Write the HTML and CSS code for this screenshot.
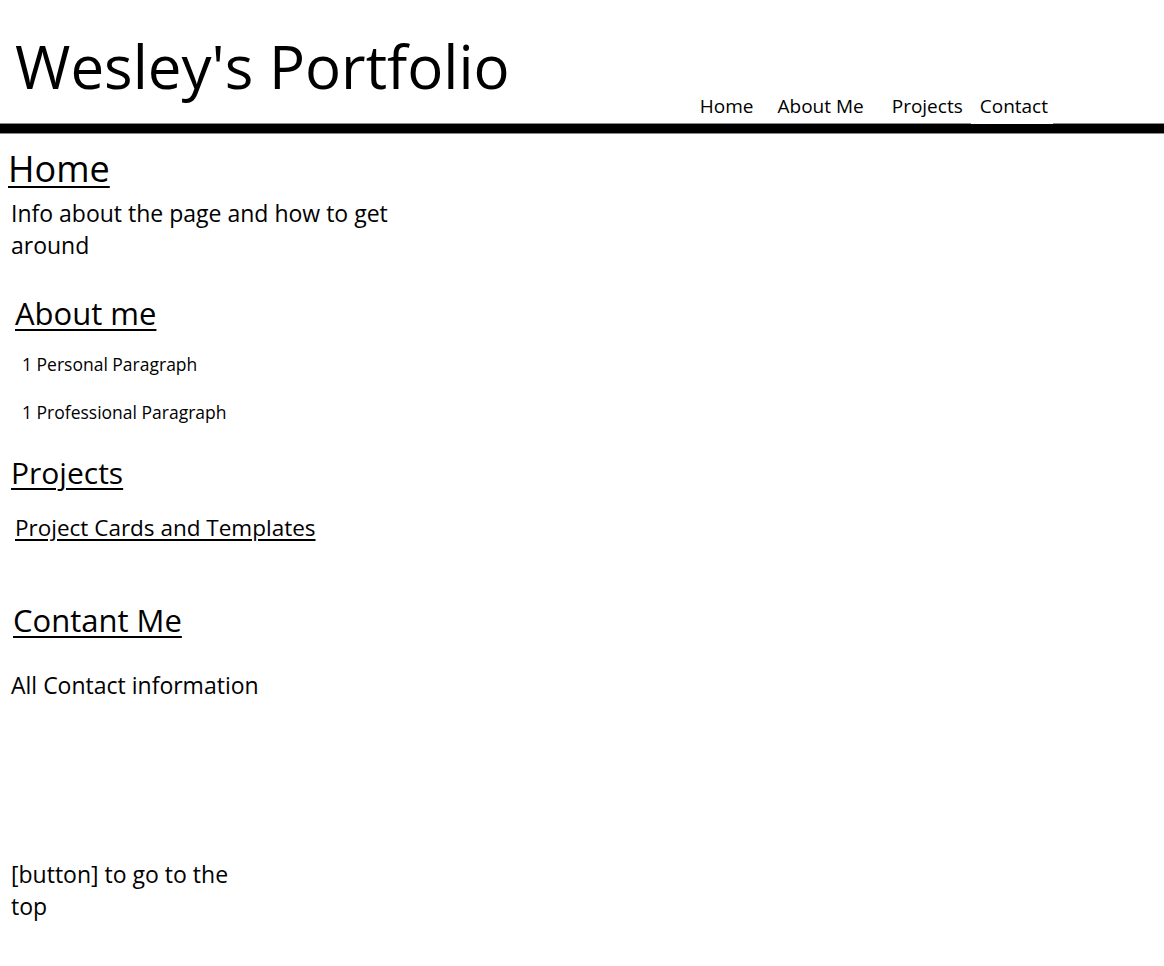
FILE: index.html
```html
<!DOCTYPE html>
<html lang="en">

<head>
    <meta charset="UTF-8">
    <meta name="viewport" content="width=device-width, initial-scale=1.0">
    <title>Wesley's Portfolio</title>
    <link rel="stylesheet" href="styles.css">
</head>

<body>

    <!-- Header -->
    <header class="header">
        <h1 class="title">Wesley's Portfolio</h1>
        <nav class="nav">
            <a href="#home">Home</a>
            <a href="#about" class="nav-about">About Me</a>
            <a href="#projects" class="nav-raised">Projects</a>
            <a href="#contact" class="nav-active">Contact</a>
        </nav>
    </header>
    <div class="bar"></div>

    <!-- Home -->
    <section id="home" class="section">
        <h2 class="heading heading-home">Home</h2>
        <p class="text text-info">Info about the page and how to get around</p>
    </section>

    <!-- About -->
    <section id="about" class="section">
        <h2 class="heading heading-about">About me</h2>
        <p class="small small-personal">1 Personal Paragraph</p>
        <p class="small small-professional">1 Professional Paragraph</p>
    </section>

    <!-- Projects -->
    <section id="projects" class="section">
        <h2 class="heading heading-projects">Projects</h2>
        <a href="#projects" class="project-link">Project Cards and Templates</a>
    </section>

    <!-- Contact -->
    <section id="contact" class="section">
        <h2 class="heading heading-contact">Contant Me</h2>
        <p class="text text-contact">All Contact information</p>
    </section>

    <p class="text text-top">[button] to go to the top</p>

</body>

</html>
```

FILE: styles.css
```css
* {
    box-sizing: border-box;
    margin: 0;
    padding: 0;
}

body {
    font-family: 'Open Sans', 'Noto Sans', sans-serif;
    background-color: #fff;
    color: #000;
}

a {
    color: #000;
}

.header {
    display: flex;
    align-items: flex-end;
    height: 123px;
}

.title {
    font-size: 60px;
    font-weight: normal;
    line-height: 1;
    margin: 36px 0 0 15px;
    align-self: flex-start;
}

.nav {
    display: flex;
    margin-left: auto;
    margin-right: 111px;
}

.nav a {
    display: block;
    font-size: 19px;
    line-height: 26px;
    padding: 0 13px 3px;
    text-decoration: none;
}

.nav .nav-about {
    padding-left: 11px;
}

.nav .nav-raised {
    padding: 0 8px 4px 15px;
}

.nav .nav-active {
    position: relative;
    z-index: 1;
    margin-bottom: -1px;
    padding: 0 5px 4px 9px;
    background-color: #fff;
}

.bar {
    height: 11px;
    background-color: #000;
    border-top: 1px solid #8a8a8a;
    border-bottom: 1px solid #8a8a8a;
}

.heading {
    font-weight: normal;
    text-decoration: underline;
    text-decoration-thickness: 2px;
    text-underline-offset: 4px;
}

.heading-home {
    font-size: 36px;
    line-height: 44px;
    margin: 13px 0 0 8px;
}

.text {
    font-size: 23px;
    line-height: 32px;
}

.text-info {
    width: 400px;
    margin: 6px 0 0 11px;
}

.heading-about {
    font-size: 31px;
    line-height: 40px;
    margin: 32px 0 0 15px;
}

.small {
    font-size: 17.5px;
    line-height: 26px;
    margin-left: 22px;
}

.small-personal {
    margin-top: 18px;
}

.small-professional {
    margin-top: 22px;
}

.heading-projects {
    font-size: 30px;
    line-height: 40px;
    margin: 28px 0 0 11px;
}

.project-link {
    display: inline-block;
    font-size: 22.5px;
    line-height: 30px;
    margin: 20px 0 0 15px;
    text-underline-offset: 3px;
}

.heading-contact {
    font-size: 31px;
    line-height: 40px;
    margin: 57px 0 0 13px;
}

.text-contact {
    margin: 29px 0 0 11px;
}

.text-top {
    width: 250px;
    margin: 157px 0 0 11px;
}
```
